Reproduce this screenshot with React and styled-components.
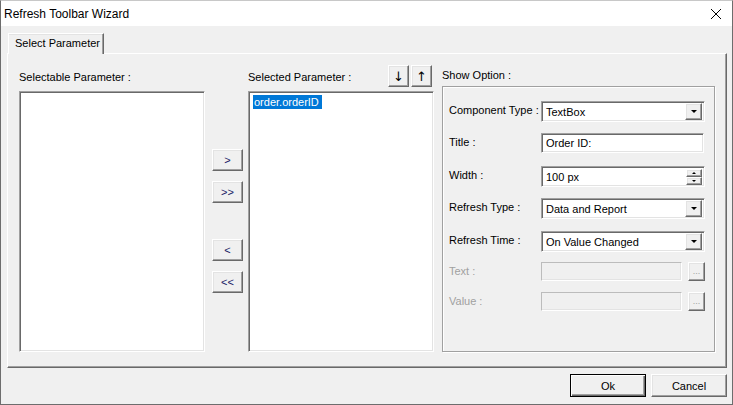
import React from "react";
import styled, { createGlobalStyle, css } from "styled-components";

const GlobalStyle = createGlobalStyle`
    html, body {
        margin: 0;
        padding: 0;
        background: #f0f0f0;
    }
    * {
        box-sizing: border-box;
    }
    body {
        font-family: "Liberation Sans", Arial, sans-serif;
        font-size: 11px;
        color: #000;
    }
`;

// bordas 3D estilo Windows clássico
const raised = css`
    border-top: 1px solid #fff;
    border-left: 1px solid #fff;
    border-right: 1px solid #696969;
    border-bottom: 1px solid #696969;
    box-shadow: inset -1px -1px 0 #a0a0a0, inset 1px 1px 0 #e3e3e3;
    background: #f0f0f0;
`;

const sunken = css`
    border-top: 1px solid #a0a0a0;
    border-left: 1px solid #a0a0a0;
    border-right: 1px solid #fff;
    border-bottom: 1px solid #fff;
    box-shadow: inset 1px 1px 0 #696969, inset -1px -1px 0 #e3e3e3;
`;

const Window = styled.div`
    width: 733px;
    height: 405px;
    display: flex;
    flex-direction: column;
    border: 1px solid #6d6d6d;
    border-top-color: #c8c8c8;
    background: #f0f0f0;
    overflow: hidden;
`;

const TitleBar = styled.div`
    height: 25px;
    flex: none;
    background: #fff;
    display: flex;
    align-items: center;
    justify-content: space-between;
    padding: 0 10px 0 3px;
`;

const TitleText = styled.span`
    font-size: 12px;
    color: #000;
`;

const Body = styled.div`
    flex: 1;
    display: flex;
    flex-direction: column;
    padding: 7px 5px 0 6px;
`;

const TabStrip = styled.div`
    display: flex;
    padding-left: 1px;
    position: relative;
    z-index: 1;
    margin-bottom: -1px;
`;

const Tab = styled.div`
    width: 96px;
    height: 21px;
    padding: 3px 0 0 6px;
    font-size: 11px;
    background: #f0f0f0;
    border-top: 1px solid #fff;
    border-left: 1px solid #fff;
    border-right: 1px solid #696969;
    box-shadow: inset -1px 0 0 #a0a0a0, inset 0 1px 0 #e3e3e3;
`;

const TabPanel = styled.div`
    height: 315px;
    display: flex;
    padding: 10px 0 0 11px;
    border-top: 1px solid #fff;
    border-left: 1px solid #fff;
    border-right: 1px solid #696969;
    border-bottom: 1px solid #696969;
    box-shadow: inset -1px -1px 0 #a0a0a0;
`;

const Column = styled.div`
    width: ${({ $w }) => $w}px;
    margin-left: ${({ $ml }) => $ml || 0}px;
    display: flex;
    flex-direction: column;
    flex: none;
`;

const Header = styled.div`
    height: ${({ $h }) => $h}px;
    display: flex;
    align-items: center;
    justify-content: space-between;
    padding-bottom: 1px;
`;

const Label = styled.span`
    font-size: 11px;
    color: ${({ $disabled }) => ($disabled ? "#a0a0a0" : "#000")};
`;

const ListBox = styled.div`
    height: 261px;
    background: #fff;
    padding: 3px 4px;
    ${sunken}
`;

const SelectedItem = styled.span`
    display: inline-block;
    background: #0078d7;
    color: #fff;
    padding: 0 3px 0 1px;
    height: 14px;
    line-height: 14px;
`;

const MoveColumn = styled.div`
    width: 31px;
    margin: 85px 5px 0 7px;
    display: flex;
    flex-direction: column;
`;

const SmallButton = styled.button`
    ${raised}
    width: 31px;
    height: 22px;
    padding: 0;
    font-family: "Liberation Sans", Arial, sans-serif;
    font-size: 11px;
    color: #1a1a66;
    margin-top: ${({ $gap }) => $gap || 0}px;
`;

const ArrowGroup = styled.div`
    display: flex;
    gap: 2px;
    margin-top: -2px;
    margin-right: 2px;
`;

const ArrowButton = styled.button`
    ${raised}
    width: 21px;
    height: 22px;
    padding: 0;
    font-family: "DejaVu Sans", sans-serif;
    font-size: 13px;
    color: #000;
`;

const GroupBox = styled.div`
    height: 266px;
    padding: 14px 9px 0 6px;
    border: 1px solid #a0a0a0;
    box-shadow: 1px 1px 0 #fff, inset 1px 1px 0 #fff;
    display: flex;
    flex-direction: column;
`;

const Row = styled.div`
    height: ${({ $h }) => $h}px;
    display: flex;
    align-items: flex-start;
    flex: none;
`;

const RowLabel = styled(Label)`
    width: 92px;
    height: 21px;
    line-height: 19px;
`;

const Field = styled.div`
    width: ${({ $w }) => $w || 164}px;
    height: ${({ $h }) => $h || 21}px;
    display: flex;
    align-items: center;
    padding: 0 2px 0 4px;
    background: ${({ $disabled }) => ($disabled ? "#f0f0f0" : "#fff")};
    ${({ $disabled }) =>
        $disabled
            ? css`
                  border: 1px solid #bcbcbc;
                  border-right-color: #fff;
                  border-bottom-color: #fff;
                  box-shadow: inset -1px -1px 0 #e3e3e3;
              `
            : sunken}
`;

const FieldText = styled.span`
    flex: 1;
    font-size: 11px;
    white-space: nowrap;
`;

const DropButton = styled.div`
    ${raised}
    width: 17px;
    height: 17px;
    flex: none;
    display: flex;
    align-items: center;
    justify-content: center;
`;

const Triangle = styled.span`
    width: 0;
    height: 0;
    border-left: ${({ $s }) => $s}px solid transparent;
    border-right: ${({ $s }) => $s}px solid transparent;
    ${({ $up, $s }) =>
        $up
            ? `border-bottom: ${$s}px solid #000;`
            : `border-top: ${$s}px solid #000;`}
`;

const Spin = styled.div`
    display: flex;
    flex-direction: column;
    flex: none;
`;

const SpinButton = styled.div`
    ${raised}
    width: 16px;
    height: 8px;
    display: flex;
    align-items: center;
    justify-content: center;
`;

const DotsButton = styled.div`
    ${raised}
    width: 17px;
    height: 19px;
    margin-left: 6px;
    color: #a0a0a0;
    font-size: 9px;
    display: flex;
    align-items: flex-end;
    justify-content: center;
    padding-bottom: 4px;
`;

const Footer = styled.div`
    display: flex;
    justify-content: flex-end;
    gap: 5px;
    padding-top: 6px;
`;

const DialogButton = styled.button`
    ${raised}
    width: 76px;
    height: 23px;
    padding: 0;
    font-family: "Liberation Sans", Arial, sans-serif;
    font-size: 11px;
    color: #000;
    ${({ $default }) =>
        $default &&
        css`
            border: 1px solid #000;
            box-shadow: inset 1px 1px 0 #fff, inset -1px -1px 0 #696969,
                inset -2px -2px 0 #a0a0a0;
        `}
`;

const CloseIcon = () => (
    <svg width="12" height="12" viewBox="0 0 12 12">
        <path d="M1 1 L11 11 M11 1 L1 11" stroke="#000" strokeWidth="1" />
    </svg>
);

const Combo = ({ value }) => (
    <Field>
        <FieldText>{value}</FieldText>
        <DropButton>
            <Triangle $s={3.5} />
        </DropButton>
    </Field>
);

const options = [
    { label: "Component Type :", h: 32, type: "combo", value: "TextBox" },
    { label: "Title :", h: 33, type: "text", value: "Order ID:" },
    { label: "Width :", h: 32, type: "spin", value: "100 px" },
    { label: "Refresh Type :", h: 33, type: "combo", value: "Data and Report" },
    { label: "Refresh Time :", h: 31, type: "combo", value: "On Value Changed" },
    { label: "Text :", h: 30, type: "disabled" },
    { label: "Value :", h: 30, type: "disabled" },
];

const renderControl = (opt) => {
    if (opt.type === "combo") return <Combo value={opt.value} />;
    if (opt.type === "text")
        return (
            <Field $h={20} $w={163}>
                <FieldText>{opt.value}</FieldText>
            </Field>
        );
    if (opt.type === "spin")
        return (
            <Field>
                <FieldText>{opt.value}</FieldText>
                <Spin>
                    <SpinButton>
                        <Triangle $up $s={2.5} />
                    </SpinButton>
                    <SpinButton>
                        <Triangle $s={2.5} />
                    </SpinButton>
                </Spin>
            </Field>
        );
    return (
        <>
            <Field $disabled $w={141} $h={19} />
            <DotsButton>...</DotsButton>
        </>
    );
};

const App = () => {
    return (
        <>
            <GlobalStyle />
            <Window>
                <TitleBar>
                    <TitleText>Refresh Toolbar Wizard</TitleText>
                    <CloseIcon />
                </TitleBar>
                <Body>
                    <TabStrip>
                        <Tab>Select Parameter</Tab>
                    </TabStrip>
                    <TabPanel>
                        <Column $w={186}>
                            <Header $h={27}>
                                <Label>Selectable Parameter :</Label>
                            </Header>
                            <ListBox />
                        </Column>

                        <MoveColumn>
                            <SmallButton>&gt;</SmallButton>
                            <SmallButton $gap={10}>&gt;&gt;</SmallButton>
                            <SmallButton $gap={36}>&lt;</SmallButton>
                            <SmallButton $gap={10}>&lt;&lt;</SmallButton>
                        </MoveColumn>

                        <Column $w={186}>
                            <Header $h={27}>
                                <Label>Selected Parameter :</Label>
                                <ArrowGroup>
                                    <ArrowButton>↓</ArrowButton>
                                    <ArrowButton>↑</ArrowButton>
                                </ArrowGroup>
                            </Header>
                            <ListBox>
                                <SelectedItem>order.orderID</SelectedItem>
                            </ListBox>
                        </Column>

                        <Column $w={273} $ml={8}>
                            <Header $h={22}>
                                <Label>Show Option :</Label>
                            </Header>
                            <GroupBox>
                                {options.map((opt) => (
                                    <Row key={opt.label} $h={opt.h}>
                                        <RowLabel $disabled={opt.type === "disabled"}>
                                            {opt.label}
                                        </RowLabel>
                                        {renderControl(opt)}
                                    </Row>
                                ))}
                            </GroupBox>
                        </Column>
                    </TabPanel>
                    <Footer>
                        <DialogButton $default>Ok</DialogButton>
                        <DialogButton>Cancel</DialogButton>
                    </Footer>
                </Body>
            </Window>
        </>
    );
};

export default App;
